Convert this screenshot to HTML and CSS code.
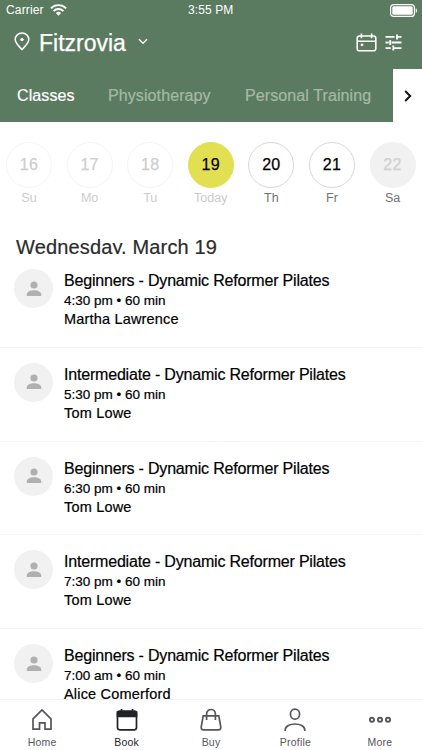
FILE: index.html
```html
<!DOCTYPE html>
<html lang="en">
<head>
<meta charset="utf-8">
<title>Book a class</title>
<link rel="stylesheet" href="styles.css">
</head>
<body>
<svg width="0" height="0" class="defs" aria-hidden="true">
  <symbol id="person" viewBox="0 0 16 16"><circle cx="8" cy="4" r="3.6"/><path d="M.8 15v-1.8C.8 10.600 5 9.300 8 9.300s7.200 1.300 7.200 3.900V15z"/></symbol>
</svg>
<div class="app">
  <header class="header">
    <div class="status">
      <span class="carrier">Carrier</span>
      <svg class="wifi" viewBox="0 0 17 12" fill="none" stroke="#fff" stroke-width="1.900"><path d="M.9 4.300a10.800 10.800 0 0 1 15.200 0M3.600 7.100a6.900 6.900 0 0 1 9.800 0"/><path d="M8.500 11.700 5.900 9.100a3.700 3.700 0 0 1 5.200 0z" fill="#fff" stroke="none"/></svg>
      <span class="clock">3:55 PM</span>
      <svg class="battery" viewBox="0 0 28 13"><rect x=".6" y=".6" width="23.800" height="11.800" rx="3" fill="none" stroke="#fff" stroke-width="1.200"/><rect x="2.300" y="2.300" width="20.400" height="8.400" rx="1.500" fill="#fff"/><path d="M25.700 4.200c2 .8 2 3.800 0 4.600z" fill="#fff"/></svg>
    </div>
    <div class="location">
      <svg class="pin" viewBox="0 0 16 19" fill="none" stroke="#fff" stroke-width="1.500"><path d="M8 17.600C5.500 14.900 1.200 11 1.200 7.500a6.800 6.500 0 0 1 13.600 0c0 3.500-4.300 7.400-6.800 10.100z"/><circle cx="8" cy="7.600" r="1.700" fill="#fff" stroke="none"/></svg>
      <span class="place">Fitzrovia</span>
      <svg class="caret" viewBox="0 0 10 7" fill="none" stroke="#fff" stroke-width="1.400"><path d="m1 1.200 4 4 4-4"/></svg>
      <svg class="cal" viewBox="0 0 21 19" fill="none" stroke="#fff" stroke-width="1.600"><rect x="1.200" y="3" width="18.600" height="14.700" rx="2.300"/><path d="M1.200 8.300h18.600M5.400.4v4.800M15.600.4v4.800"/><circle cx="6" cy="11.800" r="1.400" fill="#fff" stroke="none"/></svg>
      <svg class="tune" viewBox="0 0 17 17" fill="none" stroke="#fff" stroke-width="1.800"><path d="M.5 2.900h9M12 2.900h4.500M12 .4v5M.5 8.500h3.200M6.600 8.500h9.900M5.200 6v5M.5 14.100h5.300M8.300 14.100h8.200M8.300 11.600v5"/></svg>
    </div>
    <nav class="tabs">
      <span class="tab tab-on t1">Classes</span>
      <span class="tab t2">Physiotherapy</span>
      <span class="tab t3">Personal Training</span>
      <span class="next"><svg viewBox="0 0 8 12" fill="none" stroke="#111" stroke-width="2"><path d="m1.200 1 5 5-5 5"/></svg></span>
    </nav>
  </header>

  <section class="days">
    <div class="day past"><span class="num">16</span><span class="dow">Su</span></div>
    <div class="day past"><span class="num">17</span><span class="dow">Mo</span></div>
    <div class="day past"><span class="num">18</span><span class="dow">Tu</span></div>
    <div class="day today"><span class="num">19</span><span class="dow">Today</span></div>
    <div class="day"><span class="num">20</span><span class="dow">Th</span></div>
    <div class="day"><span class="num">21</span><span class="dow">Fr</span></div>
    <div class="day off"><span class="num">22</span><span class="dow">Sa</span></div>
  </section>

  <h1 class="date">Wednesday, March 19</h1>

  <main class="list">
    <article class="row"><span class="avatar"><svg><use href="#person"/></svg></span><div class="info"><h2>Beginners - Dynamic Reformer Pilates</h2><p class="time">4:30 pm • 60 min</p><p class="who">Martha Lawrence</p></div></article>
    <article class="row"><span class="avatar"><svg><use href="#person"/></svg></span><div class="info"><h2>Intermediate - Dynamic Reformer Pilates</h2><p class="time">5:30 pm • 60 min</p><p class="who">Tom Lowe</p></div></article>
    <article class="row"><span class="avatar"><svg><use href="#person"/></svg></span><div class="info"><h2>Beginners - Dynamic Reformer Pilates</h2><p class="time">6:30 pm • 60 min</p><p class="who">Tom Lowe</p></div></article>
    <article class="row"><span class="avatar"><svg><use href="#person"/></svg></span><div class="info"><h2>Intermediate - Dynamic Reformer Pilates</h2><p class="time">7:30 pm • 60 min</p><p class="who">Tom Lowe</p></div></article>
    <article class="row"><span class="avatar"><svg><use href="#person"/></svg></span><div class="info"><h2>Beginners - Dynamic Reformer Pilates</h2><p class="time">7:00 am • 60 min</p><p class="who">Alice Comerford</p></div></article>
  </main>

  <nav class="bar">
    <span class="item"><svg viewBox="0 0 24 24"><path d="M3 10.800 12 2l9 8.800V21.200h-6v-6.400H9.500v6.400H3z"/></svg>Home</span>
    <span class="item on"><svg viewBox="0 0 24 24"><rect x="2.500" y="3.200" width="19" height="18.600" rx="2.200"/><path d="M2.500 4h19v4.500h-19z" fill="#222327"/><path d="M6.500 1v4M17.500 1v4"/></svg>Book</span>
    <span class="item"><svg viewBox="0 0 24 24"><path d="M4.200 7.800h15.600l2 11.300q.2 2.700-2.300 2.700h-15q-2.500 0-2.300-2.700zM7.600 12V6c0-6 8.800-6 8.800 0v6"/></svg>Buy</span>
    <span class="item"><svg viewBox="0 0 24 24"><ellipse cx="12" cy="6.200" rx="4.600" ry="5"/><path d="M2.200 23v-1c0-8 19.600-8 19.600 0v1"/></svg>Profile</span>
    <span class="item"><svg viewBox="0 0 24 24"><g stroke-width="1.900"><circle cx="4" cy="11.800" r="2.100"/><circle cx="12" cy="11.800" r="2.100"/><circle cx="20" cy="11.800" r="2.100"/></g></svg>More</span>
  </nav>
</div>
</body>
</html>
```
FILE: styles.css
```css
* { box-sizing: border-box; }
body, h1, h2, p { margin: 0; font-weight: 400; }
body { font-family: "Liberation Sans", Arial, sans-serif; color: #000; background: #fff; overflow: hidden; }
svg { display: block; flex: none; }
.defs { position: absolute; }
.app { width: 422px; height: 750px; display: flex; flex-direction: column; overflow: hidden; }

.header { height: 122px; flex: none; background: #5b7b61; color: #fff; display: flex; flex-direction: column; }
.status { height: 20px; display: flex; align-items: center; padding: 0 4px 0 6px; font-size: 12px; }
.carrier { width: 44px; letter-spacing: .15px; }
.wifi { width: 17px; height: 12px; }
.clock { margin-left: 121px; width: 60px; letter-spacing: .1px; white-space: nowrap; }
.battery { width: 28px; height: 13px; margin-left: auto; }
.location { height: 49px; display: flex; align-items: center; padding: 0 20px 4px 14px; }
.pin { width: 16px; height: 19px; margin-top: -3px; }
.place { font-size: 23px; margin-left: 9px; width: 99px; line-height: 26px; -webkit-text-stroke: .25px #fff; }
.caret { width: 10px; height: 7px; margin-top: -2px; }
.cal { width: 21px; height: 19px; margin: 0 0 0 auto; }
.tune { width: 17px; height: 17px; margin-left: 8px; }
.tabs { height: 53px; display: flex; align-items: center; padding-left: 17px; font-size: 16px; letter-spacing: .1px; white-space: nowrap; }
.tab { color: #a5b9a6; -webkit-text-stroke: .2px currentColor; }
.tab-on { color: #fff; }
.t1 { width: 91px; }
.t2 { width: 137px; }
.t3 { width: 148px; }
.next { width: 29px; height: 53px; background: #fff; display: flex; align-items: center; justify-content: center; }
.next svg { width: 8px; height: 12px; }

.days { display: flex; height: 112px; padding: 20px 0 0 6px; flex: none; gap: 14.600px; }
.day { width: 46px; flex: none; display: flex; flex-direction: column; align-items: center; }
.num { width: 46px; height: 46px; border-radius: 50%; border: 1px solid #d8d8d8; display: flex; align-items: center; justify-content: center; font-size: 16px; letter-spacing: .3px; -webkit-text-stroke: .25px currentColor; }
.dow { font-size: 12.500px; line-height: 16px; margin-top: 2px; color: #727272; }
.past .num { color: #cecece; border-color: #f5f5f5; }
.past .dow, .today .dow { color: #cbcbcb; }
.today .num { background: #e2e052; border-color: #e2e052; }
.off .num { color: #d0d0d0; background: #f1f1f1; border-color: #f1f1f1; }

.date { height: 20px; margin: 0 0 0 16px; font-size: 20px; line-height: 26px; letter-spacing: .15px; color: #2b2b2b; overflow: hidden; flex: none; white-space: nowrap; -webkit-text-stroke: .2px currentColor; }
.list { flex: 1; min-height: 0; overflow: hidden; }
.row { height: 93.750px; display: flex; padding: 15px 0 0 14px; border-bottom: 1px solid #f2f2f2; }
.avatar { width: 39px; height: 39px; border-radius: 50%; background: #f1f1f1; display: flex; align-items: center; justify-content: center; fill: #b0b0b0; }
.avatar svg { width: 16px; height: 16px; }
.info { margin-left: 11px; white-space: nowrap; -webkit-text-stroke: .2px currentColor; }
.info h2 { font-size: 16px; line-height: 20px; margin-top: 2px; letter-spacing: -.19px; }
.time { font-size: 13.500px; line-height: 18px; margin-top: 1px; }
.who { font-size: 14.500px; line-height: 19px; letter-spacing: .18px; }

.bar { height: 51px; flex: none; display: flex; background: #fff; border-top: 1px solid #f1f1f1; }
.item { flex: 1; display: flex; flex-direction: column; align-items: center; font-size: 10.500px; line-height: 13px; padding-top: 8px; color: #55555b; letter-spacing: .2px; }
.item svg { width: 24px; height: 24px; fill: none; stroke: #55555b; stroke-width: 1.700; margin-bottom: 4px; }
.item.on { color: #222327; }
.item.on svg { stroke: #222327; }
```
